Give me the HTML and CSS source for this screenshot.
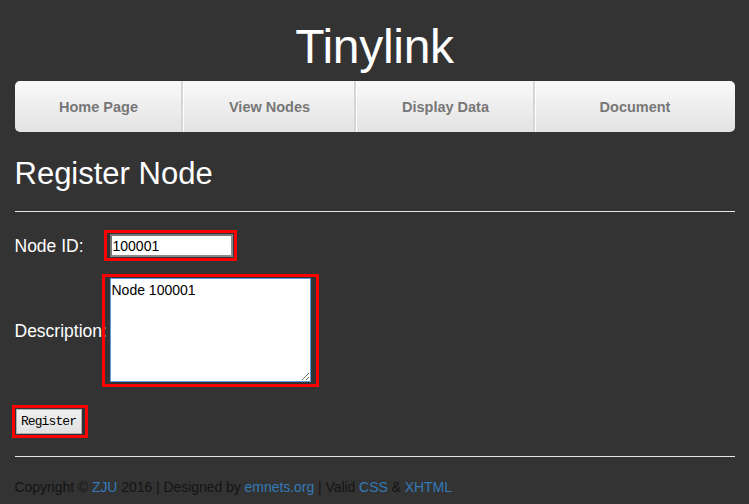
FILE: index.html
```html
<!DOCTYPE html>
<html>
<head>
<meta charset="utf-8">
<title>Tinylink</title>
<link rel="stylesheet" href="styles.css">
</head>
<body>
<div class="page">
  <header class="header">
    <h1 class="title">Tinylink</h1>
    <nav class="nav">
      <a class="nav-item">Home Page</a>
      <a class="nav-item">View Nodes</a>
      <a class="nav-item">Display Data</a>
      <a class="nav-item">Document</a>
    </nav>
  </header>
  <main class="content">
    <h2 class="heading">Register Node</h2>
    <hr class="rule">
    <form class="form">
      <div class="row">
        <label class="label">Node ID:</label>
        <span class="mark mark-input"><input class="text-input" type="text" value="100001"></span>
      </div>
      <div class="row row-desc">
        <label class="label">Description:</label>
        <span class="mark mark-area"><textarea class="text-area">Node 100001</textarea></span>
      </div>
      <div class="submit-row">
        <span class="mark mark-btn"><button class="btn" type="button">Register</button></span>
      </div>
    </form>
  </main>
  <footer class="footer">
    <hr class="rule rule-foot">
    <p class="copy">Copyright © <a class="link">ZJU</a> 2016 | Designed by <a class="link">emnets.org</a> | Valid <a class="link">CSS</a> &amp; <a class="link">XHTML</a></p>
  </footer>
</div>
</body>
</html>
```

FILE: styles.css
```css
html, body {
  margin: 0;
  padding: 0;
  background: #333333;
}
body {
  font-family: "Liberation Sans", Arial, sans-serif;
  color: #ffffff;
}
.page {
  width: 720px;
  margin: 0 auto;
}
.header {
  padding-top: 20px;
}
.title {
  margin: 0 0 8px;
  font-size: 48px;
  line-height: 53px;
  font-weight: normal;
  text-align: center;
  color: #ffffff;
  letter-spacing: -0.3px;
}
.nav {
  display: grid;
  grid-template-columns: 168px 173px 179px 1fr;
  height: 51px;
  border-radius: 5px;
  background: linear-gradient(#f9f9f9, #e3e3e3);
  overflow: hidden;
}
.nav-item {
  display: block;
  text-align: center;
  font-weight: bold;
  font-size: 14.5px;
  line-height: 53px;
  color: #777777;
  border-left: 1px solid #ffffff;
  box-shadow: -2px 0 0 #d6d6d6;
}
.nav-item:first-child {
  border-left: none;
  box-shadow: none;
}
.content {
  padding-top: 25px;
}
.heading {
  margin: 0;
  font-size: 31px;
  line-height: 34px;
  font-weight: normal;
  color: #ffffff;
}
.rule {
  margin: 20px 0 0;
  border: none;
  border-top: 1px solid #e6e6e6;
  height: 0;
}
.form {
  padding-top: 18px;
}
.row {
  display: grid;
  grid-template-columns: 87px auto;
  justify-content: start;
  align-items: center;
}
.row-desc {
  margin-top: 13px;
}
.label {
  font-size: 17.5px;
  white-space: nowrap;
  color: #ffffff;
  padding-top: 2px;
}
.mark {
  display: inline-block;
  border: 3px solid #ff0000;
  line-height: 0;
}
.mark-input {
  margin-left: 2px;
  padding: 1px 1px 1px 3px;
  background: #333333;
}
.mark-area {
  padding: 1px 5px 2px 5px;
  background: transparent;
}
.text-input {
  box-sizing: border-box;
  width: 123px;
  height: 23px;
  margin: 0;
  padding: 1px 1px;
  border: 2px solid #8c8c8c;
  border-top-color: #767676;
  border-left-color: #767676;
  font-family: "Liberation Sans", Arial, sans-serif;
  font-size: 14px;
  color: #000000;
  background: #ffffff;
}
.text-area {
  box-sizing: border-box;
  width: 201px;
  height: 104px;
  margin: 0;
  padding: 3px 1px;
  border: 1px solid #5a9bd8;
  font-family: "Liberation Sans", Arial, sans-serif;
  font-size: 14px;
  color: #000000;
  background: #ffffff;
  display: block;
}
.submit-row {
  margin-top: 18px;
  margin-left: -3px;
}
.mark-btn {
  padding: 1px 3px 1px 1px;
}
.btn {
  box-sizing: border-box;
  width: 66px;
  height: 25px;
  margin: 0;
  padding: 0;
  border: 1px solid #adadad;
  background: linear-gradient(#f0f0f0, #e1e1e1);
  font-family: "Liberation Mono", "DejaVu Sans Mono", monospace;
  font-size: 13px;
  letter-spacing: -0.9px;
  color: #000000;
}
.footer {
  margin-top: 18px;
}
.rule-foot {
  margin-top: 0;
}
.copy {
  margin: 20px 0 0;
  font-size: 14px;
  line-height: 20px;
  color: #141414;
  letter-spacing: -0.05px;
}
.link {
  color: #337ab7;
  text-decoration: none;
}
```
